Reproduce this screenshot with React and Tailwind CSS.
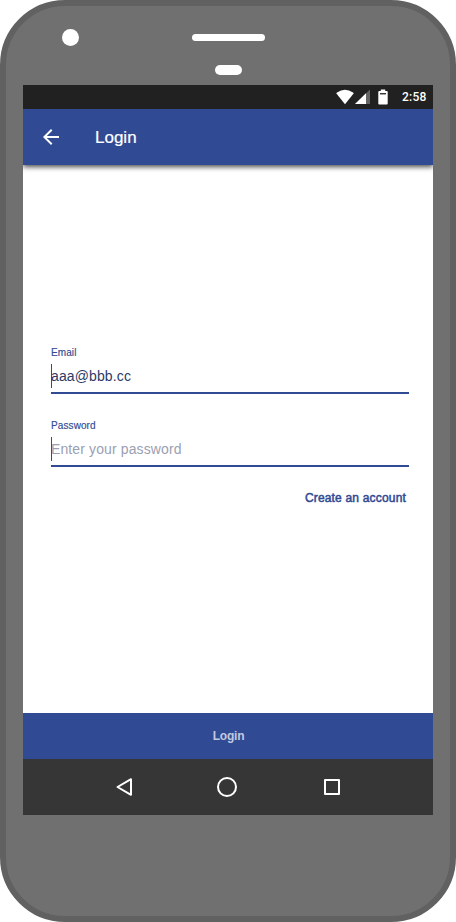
import React from "react";

function StatusBar() {
  return (
    <div className="relative z-10 flex h-6 shrink-0 items-center justify-end bg-[#212121] pr-[7px] text-white">
      <svg className="h-6 w-[72px]" viewBox="0 0 72 24" fill="white">
        <path d="M18 19.3 L9.2 8.3 Q9.4 7.8 10 7.4 Q18 2.3 26 7.4 Q26.6 7.8 26.8 8.3 Z" />
        <path d="M43 4.5 V19 H28 Z" fillOpacity="0.3" />
        <path d="M39 8.2 V19 H28 Z" />
        <path d="M53.8 4.5 h4.4 v1.5 h1.5 q1 0 1 1 V18.5 q0 1 -1 1 h-7.4 q-1 0 -1 -1 V7 q0 -1 1 -1 h1.5 Z" />
        <path d="M53 8.1 h6 v1.3 h-6 Z" fill="#212121" />
      </svg>
      <span className="ml-[3px] w-[24px] whitespace-nowrap font-[Roboto,sans-serif] text-[12px] font-medium leading-6 tracking-[0.2px]">2:58</span>
    </div>
  );
}

function Header() {
  return (
    <header className="flex h-14 shrink-0 items-center bg-[#304a94] pl-4 text-white shadow-[0_2px_5px_rgba(0,0,0,0.7)]">
      <svg className="size-6" viewBox="0 0 24 24" fill="white">
        <path d="M20 11H7.83l5.59-5.59L12 4l-8 8 8 8 1.41-1.41L7.83 13H20v-2z" />
      </svg>
      <h1 className="ml-8 pt-0.5 text-[17px] leading-6 [-webkit-text-stroke:0.2px_white]">Login</h1>
    </header>
  );
}

function Field({ label, value, placeholder }) {
  return (
    <div className="flex flex-col">
      <span className="text-[10px] leading-3 tracking-[0.1px] text-[#304a94] [-webkit-text-stroke:0.15px_#304a94]">{label}</span>
      <div className="mt-[5px] h-[30px] border-b-2 border-[#304a94]">
        <div className="h-6 border-l border-[#304a94] text-[14px] leading-6 tracking-[0.12px]">
          <span className={value ? "-ml-px text-[#2b3a66]" : "-ml-px text-[#9a9fb3]"}>{value || placeholder}</span>
        </div>
      </div>
    </div>
  );
}

function NavBar() {
  return (
    <nav className="h-14 shrink-0 bg-[#363636]">
      <svg className="h-14 w-[410px]" viewBox="0 0 410 56" fill="none" stroke="white" strokeWidth="2" strokeLinejoin="round">
        <path d="M94.5 28 L108 20.2 V35.8 Z" />
        <circle cx="204" cy="28" r="9" />
        <rect x="302" y="21" width="14" height="14" />
      </svg>
    </nav>
  );
}

export default function App() {
  return (
    <div className="flex h-[922px] w-[456px] flex-col items-center rounded-[65px] border-6 border-[#616161] bg-[#707070] font-[Liberation_Sans,Arial,sans-serif]">
      <div className="flex h-[79px] w-full shrink-0 flex-col items-center">
        <div className="flex h-[46px] w-full items-center pt-[16px] pl-[56px]">
          <div className="size-[17px] rounded-full bg-white" />
          <div className="ml-[113px] h-[7px] w-[73px] rounded-full bg-white" />
        </div>
        <div className="mt-[13px] h-[10px] w-[27px] rounded-full bg-white" />
      </div>
      <div className="flex h-[730px] w-[410px] flex-col overflow-hidden bg-white">
        <StatusBar />
        <Header />
        <main className="flex flex-1 flex-col pt-[182px] pr-6 pl-7">
          <Field label="Email" value="aaa@bbb.cc" />
          <div className="h-[26px]" />
          <Field label="Password" placeholder="Enter your password" />
          <a className="mt-[23px] mr-[3px] self-end text-[12px] leading-4 tracking-[0.18px] text-[#304a94] [-webkit-text-stroke:0.5px_#304a94]">Create an account</a>
        </main>
        <button className="h-[46px] shrink-0 bg-[#304a94] pl-px text-[12px] font-bold tracking-[-0.2px] text-[#c1c9df]">Login</button>
        <NavBar />
      </div>
    </div>
  );
}
